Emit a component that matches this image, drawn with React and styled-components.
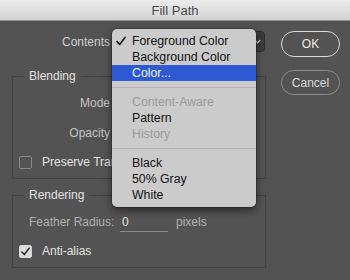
import React from "react";
import styled, { createGlobalStyle } from "styled-components";

const GlobalStyle = createGlobalStyle`
  html, body { margin: 0; padding: 0; background: #535353; }
  body { font-family: "Liberation Sans", Arial, Helvetica, sans-serif; }
  * { box-sizing: border-box; }
`;

const Window = styled.div`
  position: relative;
  width: 350px;
  height: 280px;
  overflow: hidden;
  background: #535353;
`;

const TitleBar = styled.div`
  height: 21px;
  display: flex;
  align-items: center;
  justify-content: center;
  background: linear-gradient(#ececec, #d2d2d2);
  border-bottom: 1px solid #8c8c8c;
  font-size: 13px;
  color: #4a4a4a;
`;

const Body = styled.div`
  display: flex;
  gap: 15px;
  padding: 10px 0 0 12px;
`;

const Main = styled.div`
  width: 254px;
  display: flex;
  flex-direction: column;
`;

const TopRow = styled.div`
  display: flex;
  align-items: center;
  height: 21px;
  margin-left: -12px;
  gap: 2px;
`;

const Label = styled.div`
  width: ${(p) => p.$w}px;
  flex: none;
  text-align: right;
  font-size: 12px;
  color: ${(p) => p.$color || "#c8c8c8"};
  white-space: nowrap;
`;

const Select = styled.div`
  width: 153px;
  height: 21px;
  display: flex;
  align-items: center;
  justify-content: flex-end;
  padding-right: 3px;
  background: #3c3c3c;
  border: 1px solid #2e2e2e;
  border-radius: 4px;
`;

const Group = styled.fieldset`
  margin: ${(p) => p.$mt}px 0 0;
  padding: 9px 6px 9px;
  border: 1px solid #434343;
  min-width: 0;
`;

const Legend = styled.legend`
  margin-left: 5px;
  padding: 0 5px;
  font-size: 12px;
  line-height: 14px;
  color: #e2e2e2;
`;

const FieldRow = styled.div`
  display: flex;
  align-items: center;
  height: 22px;
  margin-top: ${(p) => p.$mt || 0}px;
  padding-left: ${(p) => p.$pl || 0}px;
  font-size: 12px;
  white-space: nowrap;
`;

const CheckRow = styled.div`
  display: flex;
  align-items: center;
  gap: 10px;
  height: 14px;
  margin-top: ${(p) => p.$mt || 0}px;
  font-size: 12px;
  color: #e2e2e2;
  white-space: nowrap;
`;

const Box = styled.div`
  width: 13px;
  height: 13px;
  flex: none;
  border-radius: 2px;
  border: 1px solid ${(p) => (p.$checked ? "#d8d8d8" : "#8a8a8a")};
  background: ${(p) => (p.$checked ? "#dcdcdc" : "transparent")};
  display: flex;
  align-items: center;
  justify-content: center;
`;

const NumberField = styled.div`
  width: 48px;
  height: 20px;
  margin-left: 7px;
  padding-left: 2px;
  display: flex;
  align-items: center;
  border-bottom: 1px solid #8a8a8a;
  color: #e6e6e6;
`;

const Unit = styled.span`
  margin-left: 8px;
  color: #b2b2b2;
`;

const Buttons = styled.div`
  display: flex;
  flex-direction: column;
  gap: 13px;
`;

const Button = styled.div`
  width: 59px;
  height: ${(p) => (p.$primary ? 26 : 25)}px;
  border-radius: 13px;
  border: ${(p) => (p.$primary ? "1.5px solid #dcdcdc" : "1px solid #8c8c8c")};
  display: flex;
  align-items: center;
  justify-content: center;
  font-size: 12px;
  color: ${(p) => (p.$primary ? "#ececec" : "#dadada")};
`;

const Menu = styled.div`
  position: absolute;
  left: 112px;
  top: 29px;
  width: 144px;
  padding: 4px 0;
  background: #cbcbcb;
  border-radius: 5px;
  box-shadow: 0 3px 9px rgba(0, 0, 0, 0.55), 0 0 0 0.5px rgba(0, 0, 0, 0.3);
  font-size: 12.3px;
`;

const Item = styled.div`
  height: 16px;
  display: grid;
  grid-template-columns: 20px 1fr;
  align-items: center;
  background: ${(p) => (p.$active ? "#2d5ad2" : "transparent")};
  color: ${(p) => (p.$active ? "#eef1ff" : p.$disabled ? "#9c9c9c" : "#141414")};
  white-space: nowrap;
`;

const CheckCell = styled.span`
  display: flex;
  align-items: center;
  padding-left: 4px;
`;

const Separator = styled.div`
  height: 1px;
  margin: 6px 0;
  background: #b3b3b3;
`;

const Tick = ({ size = 10, color = "#111", width = 1.6 }) => (
  <svg width={size} height={size} viewBox="0 0 10 10">
    <path d="M1 5.6 L3.7 8.4 L9 1.4" fill="none" stroke={color} strokeWidth={width} strokeLinecap="round" strokeLinejoin="round" />
  </svg>
);

const Chevron = () => (
  <svg width="7" height="5" viewBox="0 0 7 5">
    <path d="M0.8 1 L3.5 3.8 L6.2 1" fill="none" stroke="#cfcfcf" strokeWidth="1.2" />
  </svg>
);

const menu = [
  [
    { label: "Foreground Color", checked: true },
    { label: "Background Color" },
    { label: "Color...", active: true },
  ],
  [
    { label: "Content-Aware", disabled: true },
    { label: "Pattern" },
    { label: "History", disabled: true },
  ],
  [{ label: "Black" }, { label: "50% Gray" }, { label: "White" }],
];

export default function App() {
  return (
    <>
      <GlobalStyle />
      <Window>
        <TitleBar>Fill Path</TitleBar>
        <Body>
          <Main>
            <TopRow>
              <Label $w={110} $color="#cfcfcf">Contents</Label>
              <Select>
                <Chevron />
              </Select>
            </TopRow>
            <Group $mt={17}>
              <Legend>Blending</Legend>
              <FieldRow>
                <Label $w={91} $color="#c2c2c2">Mode</Label>
              </FieldRow>
              <FieldRow $mt={8}>
                <Label $w={91} $color="#c2c2c2">Opacity</Label>
              </FieldRow>
              <CheckRow $mt={11}>
                <Box />
                Preserve Transparency
              </CheckRow>
            </Group>
            <Group $mt={9}>
              <Legend>Rendering</Legend>
              <FieldRow $pl={10}>
                <Label $w={84} $color="#afafaf" style={{ textAlign: "left" }}>Feather Radius:</Label>
                <NumberField>0</NumberField>
                <Unit>pixels</Unit>
              </FieldRow>
              <CheckRow $mt={11}>
                <Box $checked>
                  <Tick size={9} color="#333" width={1.8} />
                </Box>
                Anti-alias
              </CheckRow>
            </Group>
          </Main>
          <Buttons>
            <Button $primary>OK</Button>
            <Button>Cancel</Button>
          </Buttons>
        </Body>
        <Menu>
          {menu.map((section, si) => (
            <React.Fragment key={si}>
              {si > 0 && <Separator />}
              {section.map((it) => (
                <Item key={it.label} $active={it.active} $disabled={it.disabled}>
                  <CheckCell>{it.checked && <Tick />}</CheckCell>
                  <span>{it.label}</span>
                </Item>
              ))}
            </React.Fragment>
          ))}
        </Menu>
      </Window>
    </>
  );
}
